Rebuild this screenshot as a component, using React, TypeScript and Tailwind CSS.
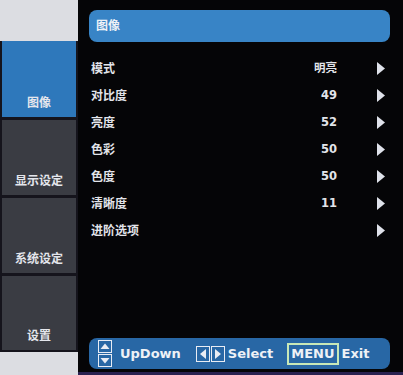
import React from "react";

const rows = [
  { label: "模式", value: "明亮" },
  { label: "对比度", value: "49" },
  { label: "亮度", value: "52" },
  { label: "色彩", value: "50" },
  { label: "色度", value: "50" },
  { label: "清晰度", value: "11" },
  { label: "进阶选项", value: "" },
];

const tabs = [
  { label: "图像", active: true, h: "h-[76px]" },
  { label: "显示设定", active: false, h: "h-[75px]" },
  { label: "系统设定", active: false, h: "h-[75px]" },
  { label: "设置", active: false, h: "h-[74px]" },
];

function Arrow() {
  return (
    <svg width="8" height="13" viewBox="0 0 8 13">
      <path d="M0 0 L8 6.5 L0 13 Z" fill="#dfe2ea" />
    </svg>
  );
}

function UpDownIcon() {
  return (
    <svg width="14" height="27" viewBox="0 0 14 27">
      <rect x="0.5" y="0.5" width="13" height="12" fill="none" stroke="#e8ecf4" />
      <path d="M2.5 9 L7 3.5 L11.5 9 Z" fill="#e8ecf4" />
      <rect x="0.5" y="14.5" width="13" height="12" fill="none" stroke="#e8ecf4" />
      <path d="M2.5 18 L7 23.5 L11.5 18 Z" fill="#e8ecf4" />
    </svg>
  );
}

function LeftRightIcon() {
  return (
    <svg width="29" height="16" viewBox="0 0 29 16">
      <rect x="0.5" y="0.5" width="13" height="15" fill="none" stroke="#e8ecf4" />
      <path d="M10 3 L4 8 L10 13 Z" fill="#e8ecf4" />
      <rect x="15.5" y="0.5" width="13" height="15" fill="none" stroke="#e8ecf4" />
      <path d="M19 3 L25 8 L19 13 Z" fill="#e8ecf4" />
    </svg>
  );
}

export default function App() {
  return (
    <div
      className="w-[403px] h-[375px] flex bg-[#050507] overflow-hidden"
      style={{ fontFamily: '"DejaVu Sans", "Noto Sans CJK SC", sans-serif' }}
    >
      {/* left tab column */}
      <div className="w-[78px] flex flex-col bg-[#15141c]">
        <div className="h-[41px] bg-[#dcdde2]" />
        <div className="flex flex-col gap-[3px] pl-[2px] pr-[2px]">
          {tabs.map((t) => (
            <div
              key={t.label}
              className={`${t.h} flex items-end justify-center pb-[5px] text-[12px] font-bold text-[#e4e6ec] ${
                t.active ? "bg-[#2e78bb]" : "bg-[#3a3c43]"
              }`}
            >
              {t.label}
            </div>
          ))}
        </div>
        <div className="mt-auto h-[23px] bg-[#dcdde2]" />
      </div>

      {/* main panel */}
      <div className="flex-1 flex flex-col border-b-[3px] border-[#2a2150] pl-[11px] pr-[13px]">
        <div className="mt-[10px] h-[32px] rounded-lg bg-[#3884c6] flex items-center pl-[7px] text-[12px] font-bold text-[#eef1f6]">
          图像
        </div>
        <div className="mt-[13px] flex flex-col">
          {rows.map((r) => (
            <div key={r.label} className="h-[27px] flex items-center text-[12px] font-bold text-[#e2e4ea]">
              <span className="pl-[2px] flex-1">{r.label}</span>
              <span className="w-[60px] text-right text-[11.5px]">{r.value}</span>
              <span className="w-[53px] flex justify-end pr-[5px]">
                <Arrow />
              </span>
            </div>
          ))}
        </div>
        <div className="mt-auto mb-[3px] h-[31px] rounded-lg bg-[#2867a5] flex items-center pl-[9px] text-[13px] font-bold text-[#eef1f6]">
          <UpDownIcon />
          <span className="ml-[8px]">UpDown</span>
          <span className="ml-[15px]">
            <LeftRightIcon />
          </span>
          <span className="ml-[3px]">Select</span>
          <span className="ml-[14px] border-2 border-[#c8e8b8] px-[2px] leading-[18px]">MENU</span>
          <span className="ml-[3px]">Exit</span>
        </div>
      </div>
    </div>
  );
}
